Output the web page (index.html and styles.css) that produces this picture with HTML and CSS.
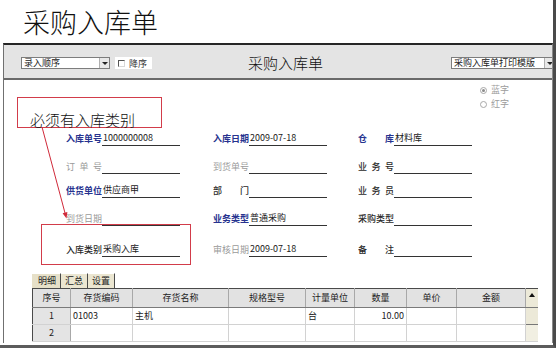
FILE: index.html
```html
<!DOCTYPE html>
<html lang="zh">
<head>
<meta charset="utf-8">
<title>采购入库单</title>
<link rel="stylesheet" href="styles.css">
</head>
<body>
<div class="slide">
  <h1 class="title">采购入库单</h1>
  <div class="frame">
    <div class="toolbar">
      <div class="combo combo-order"><span class="combo-text">录入顺序</span><span class="combo-btn"><i class="tri"></i></span></div>
      <div class="check"><span class="box"></span><span class="check-text">降序</span></div>
      <div class="tb-title">采购入库单</div>
      <div class="combo combo-print"><span class="combo-text">采购入库单打印模版</span><span class="combo-btn"><i class="tri"></i></span></div>
    </div>
    <div class="content">
      <div class="radios">
        <div class="radio"><span class="dot on"></span>蓝字</div>
        <div class="radio"><span class="dot"></span>红字</div>
      </div>
      <div class="form">
        <div class="field"><span class="lbl blue">入库单号</span><span class="val">1000000008</span></div>
        <div class="field"><span class="lbl blue">入库日期</span><span class="val">2009-07-18</span></div>
        <div class="field"><span class="lbl blue">仓库</span><span class="val">材料库</span></div>

        <div class="field"><span class="lbl grey">订单号</span><span class="val"></span></div>
        <div class="field"><span class="lbl grey">到货单号</span><span class="val"></span></div>
        <div class="field"><span class="lbl dark">业务号</span><span class="val"></span></div>

        <div class="field"><span class="lbl blue">供货单位</span><span class="val">供应商甲</span></div>
        <div class="field"><span class="lbl dark">部门</span><span class="val"></span></div>
        <div class="field"><span class="lbl dark">业务员</span><span class="val"></span></div>

        <div class="field"><span class="lbl grey">到货日期</span><span class="val"></span></div>
        <div class="field"><span class="lbl blue">业务类型</span><span class="val">普通采购</span></div>
        <div class="field"><span class="lbl dark">采购类型</span><span class="val"></span></div>

        <div class="field"><span class="lbl dark">入库类别</span><span class="val">采购入库</span></div>
        <div class="field"><span class="lbl grey">审核日期</span><span class="val">2009-07-18</span></div>
        <div class="field"><span class="lbl dark">备注</span><span class="val"></span></div>
      </div>
      <div class="tabs">
        <span class="tab active">明细</span><span class="tab">汇总</span><span class="tab">设置</span>
      </div>
      <table class="grid">
        <colgroup>
          <col class="c1"><col class="c2"><col class="c3"><col class="c4"><col class="c5"><col class="c6"><col class="c7"><col class="c8"><col class="c9">
        </colgroup>
        <thead>
          <tr><th>序号</th><th>存货编码</th><th>存货名称</th><th>规格型号</th><th>计量单位</th><th>数量</th><th>单价</th><th>金额</th><th class="sb"><i class="up"></i></th></tr>
        </thead>
        <tbody>
          <tr><td class="num">1</td><td>01003</td><td>主机</td><td></td><td>台</td><td class="right">10.00</td><td></td><td></td><td class="sb thumb"></td></tr>
          <tr><td class="num">2</td><td></td><td></td><td></td><td></td><td></td><td></td><td></td><td class="sb"></td></tr>
        </tbody>
      </table>
    </div>
  </div>
  <div class="annot">
    <div class="rbox rbox1"></div>
    <div class="note">必须有入库类别</div>
    <div class="rbox rbox2"></div>
    <svg class="arrow" width="558" height="351" viewBox="0 0 558 351">
      <line x1="42" y1="127" x2="65" y2="213" stroke="#d02a3a" stroke-width="1"/>
      <polygon points="66.5,218.5 67.4,212.1 62.6,213.3" fill="#d02a3a"/>
    </svg>
  </div>
</div>
</body>
</html>
```

FILE: styles.css
```css
* {
  box-sizing: border-box;
  margin: 0;
  padding: 0;
}

html, body {
  width: 558px;
  height: 351px;
  overflow: hidden;
  background: #fff;
}

body {
  font-family: "Noto Sans CJK SC", "Liberation Sans", sans-serif;
  color: #222;
}

.slide {
  position: relative;
  width: 556px;
  height: 348px;
  border-right: 3px solid #4a4a4a;
  border-bottom: 3px solid #5c5c5c;
}

.title {
  height: 40px;
  padding: 4px 0 0 23px;
  font-size: 27px;
  line-height: 36px;
  font-weight: 300;
  color: #111;
}

.frame {
  margin: 3px 0 0 3px;
  width: 550px;
  height: 300px;
  border-left: 1px solid #707070;
  border-top: 2px solid #262626;
  border-right: 1px solid #8a8a8a;
  overflow: hidden;
}

/* toolbar */
.toolbar {
  height: 35px;
  background: #e4e4e4;
  border-bottom: 2px solid #6a6a6a;
  display: flex;
  align-items: center;
  padding: 3px 0 0 17px;
  white-space: nowrap;
}

.combo {
  display: flex;
  align-items: stretch;
  height: 12px;
  background: #fff;
  border: 1px solid #7d7d7d;
  font-size: 9px;
  line-height: 10px;
  flex: none;
}

.combo-text {
  padding-left: 2px;
  color: #222;
}

.combo-btn {
  margin-left: auto;
  width: 10px;
  background: #e8e8e8;
  border-left: 1px solid #b0b0b0;
  display: flex;
  align-items: center;
  justify-content: center;
}

.tri {
  width: 0;
  height: 0;
  border-left: 3px solid transparent;
  border-right: 3px solid transparent;
  border-top: 3px solid #222;
}

.combo-order {
  width: 89px;
}

.check {
  margin-left: 5px;
  height: 12px;
  background: #fff;
  display: flex;
  align-items: center;
  padding: 0 5px 0 3px;
  gap: 4px;
  font-size: 9px;
  color: #333;
  flex: none;
}

.box {
  width: 7px;
  height: 7px;
  border: 1px solid;
  border-color: #555 #d8d8d8 #d8d8d8 #555;
}

.tb-title {
  margin-left: 96px;
  font-size: 15px;
  line-height: 16px;
  font-weight: 300;
  color: #111;
  flex: none;
}

.combo-print {
  margin-left: 128px;
  width: 104px;
}

/* content */
.radios {
  padding-top: 3px;
  margin-left: 476px;
  font-size: 9px;
  line-height: 14px;
  color: #9c9c9c;
}

.radio {
  display: flex;
  align-items: center;
  gap: 4px;
}

.dot {
  width: 7px;
  height: 7px;
  border-radius: 50%;
  border: 1px solid #a8a8a8;
  display: flex;
  align-items: center;
  justify-content: center;
}

.dot.on::after {
  content: "";
  width: 3px;
  height: 3px;
  border-radius: 50%;
  background: #8a8a8a;
}

.form {
  display: grid;
  margin: 20px 0 0 62px;
  grid-template-columns: 147px 145px 150px;
  grid-template-rows: 15px 28px 24px 28px 31px;
  align-items: end;
}

.field {
  display: flex;
  align-items: flex-end;
  height: 15px;
}

.lbl {
  width: 36px;
  font-size: 9px;
  line-height: 12px;
  margin-bottom: 1px;
  text-align: justify;
  text-align-last: justify;
  white-space: nowrap;
  overflow: hidden;
}

.lbl.blue {
  color: #27338f;
  font-weight: 700;
}

.lbl.grey {
  color: #9a9a9a;
}

.lbl.dark {
  color: #2a2a2a;
  font-weight: 500;
}

.val {
  width: 78px;
  height: 14px;
  border-bottom: 1px solid #333;
  font-size: 9px;
  line-height: 12px;
  padding-left: 1px;
  color: #1a1a1a;
  white-space: nowrap;
}

/* tabs */
.tabs {
  margin: 16px 0 0 28px;
  height: 15px;
  display: flex;
}

.tab {
  font-size: 9px;
  line-height: 14px;
  padding: 0 4px;
  background: #ebe6d1;
  border-right: 1px solid #4a4a4a;
  border-top: 1px solid #fff;
  color: #222;
}

.tab.active {
  padding-left: 6px;
  background: #e6e0c8;
}

/* table */
.grid {
  margin-left: 28px;
  width: 505px;
  border-collapse: collapse;
  table-layout: fixed;
  border-top: 1px solid #4a4a4a;
  border-left: 1px solid #4a4a4a;
  font-size: 9px;
  color: #222;
}

.c1 { width: 38px; }
.c2 { width: 62px; }
.c3 { width: 96px; }
.c4 { width: 77px; }
.c5 { width: 49px; }
.c6 { width: 52px; }
.c7 { width: 50px; }
.c8 { width: 69px; }
.c9 { width: 12px; }

.grid th {
  height: 19px;
  background: #e2e2e2;
  font-weight: 400;
  border-right: 1px solid #a8a8a8;
  border-bottom: 1px solid #7a7a7a;
  text-align: center;
  line-height: 12px;
  padding: 0;
}

.grid td {
  height: 17px;
  border-right: 1px solid #d2d2d2;
  border-bottom: 1px solid #d2d2d2;
  padding: 0 2px;
  line-height: 12px;
  white-space: nowrap;
}

.grid td.num {
  background: #e4e4e4;
  text-align: center;
  border-right-color: #a8a8a8;
}

.grid td.right {
  text-align: right;
}

.grid .sb {
  background: #f1efe2;
  border-right: none;
  padding: 0;
}

.grid th.sb {
  background: #ece9d8;
  vertical-align: top;
}

.up {
  display: block;
  margin: 4px auto 0;
  width: 0;
  height: 0;
  border-left: 3px solid transparent;
  border-right: 3px solid transparent;
  border-bottom: 4px solid #111;
}

.grid td.thumb {
  background: #ece9d8;
  border-top: 1px solid #777;
  border-bottom: 1px solid #777;
}

/* annotations */
.annot {
  position: absolute;
  left: 0;
  top: 0;
  width: 558px;
  height: 351px;
  pointer-events: none;
}

.rbox {
  position: absolute;
  border: 1px solid #d23c4a;
}

.rbox1 {
  left: 17px;
  top: 97px;
  width: 145px;
  height: 31px;
}

.rbox2 {
  left: 41px;
  top: 224px;
  width: 150px;
  height: 41px;
}

.note {
  position: absolute;
  left: 30px;
  top: 111px;
  font-size: 15px;
  line-height: 17px;
  font-weight: 300;
  color: #111;
  white-space: nowrap;
}

.arrow {
  position: absolute;
  left: 0;
  top: 0;
}
```
